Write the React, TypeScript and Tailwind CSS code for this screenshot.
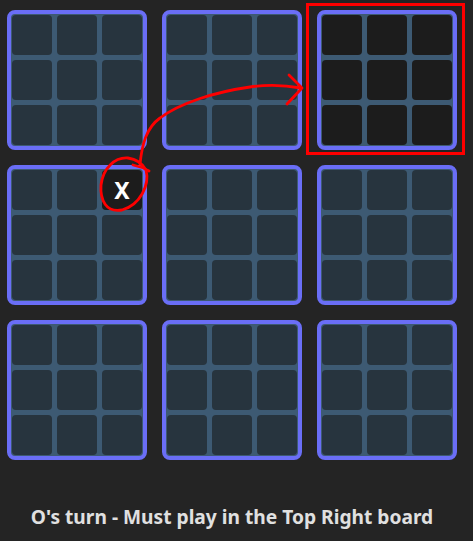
import React from "react";

const boards = Array.from({ length: 9 }, (_, i) => i);
const cells = Array.from({ length: 9 }, (_, i) => i);

function Board({ index }: { index: number }) {
  const active = index === 2;
  return (
    <div className="w-[140px] h-[140px] rounded-[8px] border-[4px] border-[#6a6ef6] bg-[#3d5a73] p-[1px] grid grid-cols-3 grid-rows-3 gap-[5px]">
      {cells.map((c) => {
        const isX = index === 3 && c === 2;
        return (
          <div
            key={c}
            className={
              "w-[40px] h-[40px] rounded-[4px] flex items-center justify-center " +
              (active || isX ? "bg-[#1c1c1c]" : "bg-[#27343e]")
            }
          >
            {isX && (
              <span className="text-white font-bold text-[23px] leading-none" style={{ fontFamily: '"Noto Sans", sans-serif' }}>
                X
              </span>
            )}
          </div>
        );
      })}
    </div>
  );
}

export default function App() {
  return (
    <div className="relative w-[473px] h-[541px] bg-[#242424] overflow-hidden" style={{ fontFamily: '"Noto Sans", sans-serif' }}>
      <div className="pl-[7px] pt-[10px] grid grid-cols-[140px_140px_140px] gap-[15px] w-max">
        {boards.map((b) => (
          <Board key={b} index={b} />
        ))}
      </div>
      <div className="mt-[43px] pr-[9px] text-center text-[19.2px] leading-[28px] font-bold text-[#e0e0e0]">
        O's turn - Must play in the Top Right board
      </div>
      <svg className="absolute left-0 top-0 pointer-events-none" width="473" height="541" viewBox="0 0 473 541" fill="none">
        <rect x="307.5" y="4.5" width="156" height="149" stroke="#ff0000" strokeWidth="3" />
        <path
          d="M140 164 C 142 145, 146 128, 160 118 C 180 103, 215 92, 250 87 C 270 84, 290 86, 301 88"
          stroke="#ff0000"
          strokeWidth="2.8"
          strokeLinecap="round"
        />
        <path d="M289 75 L 302 88 L 287 104" stroke="#ff0000" strokeWidth="2.8" strokeLinecap="round" strokeLinejoin="round" />
        <path d="M133 165 C 138 166, 144 168, 149 171" stroke="#ff0000" strokeWidth="2.8" strokeLinecap="round" />
        <path
          d="M146 170 C 150 185, 140 205, 122 210 C 106 213, 100 200, 101 185 C 103 168, 115 157, 128 158 C 136 159, 142 163, 146 170"
          stroke="#ff0000"
          strokeWidth="2.8"
          strokeLinecap="round"
        />
      </svg>
    </div>
  );
}
